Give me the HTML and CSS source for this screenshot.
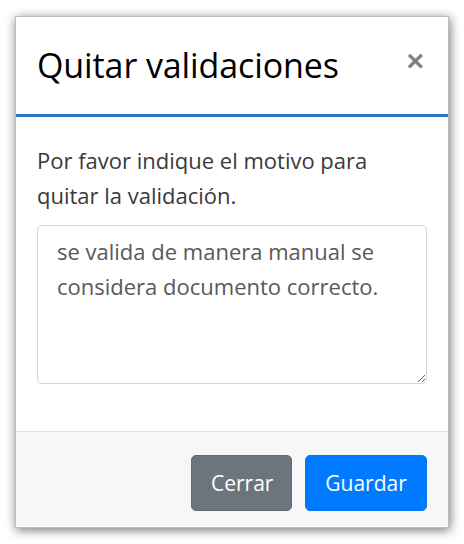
FILE: index.html
```html
<!DOCTYPE html>
<html lang="es">
<head>
    <meta charset="UTF-8">
    <meta name="viewport" content="width=device-width, initial-scale=1.0">
    <title>Quitar validaciones</title>
    <link rel="stylesheet" href="styles.css">
</head>
<body>
    <div class="modal">
        <div class="modal-header">
            <h5 class="modal-title">Quitar validaciones</h5>
            <button type="button" class="close" aria-label="Close">&times;</button>
        </div>
        <div class="modal-body">
            <p class="prompt">Por favor indique el motivo para quitar la validación.</p>
            <textarea class="form-control" rows="4">se valida de manera manual se considera documento correcto.</textarea>
        </div>
        <div class="modal-footer">
            <button type="button" class="btn btn-secondary">Cerrar</button>
            <button type="button" class="btn btn-primary">Guardar</button>
        </div>
    </div>
</body>
</html>
```

FILE: styles.css
```css
* { margin: 0; padding: 0; box-sizing: border-box; }
body {
    font-family: 'Open Sans', 'Noto Sans', sans-serif;
    background: white;
    padding: 16px 15px;
}
.modal {
    width: 434px; height: 512px; background: white;
    border: 1px solid #bdbdbd;
    box-shadow: 1px 2px 10px rgba(0,0,0,0.55);
    display: flex; flex-direction: column;
}
.modal-header {
    height: 100px; display: flex; align-items: center; justify-content: space-between;
    padding: 0 24px 0 21px; border-bottom: 3px solid #2878c8;
}
.modal-title { font-size: 34px; font-weight: 500; color: #000; margin-top: -2px; letter-spacing: -0.1px; }
.close {
    background: none; border: none; font-family: 'Liberation Sans', sans-serif;
    font-size: 30px; font-weight: bold; color: #808080; line-height: 1; margin-top: -10px;
}
.modal-body { flex: 1; padding: 26px 21px 0 21px; }
.prompt { font-size: 22px; line-height: 35px; color: #3a3a3a; margin-bottom: 12px; }
.form-control {
    display: block; width: 390px; height: 159px; resize: vertical;
    border: 1px solid #ced4da; border-radius: 5px;
    padding: 8px 19px; font-family: inherit; font-size: 22px; line-height: 35px;
    color: #595959;
}
.modal-footer {
    height: 96px; background: #f7f7f7; border-top: 1px solid #dde3ea;
    display: flex; align-items: flex-start; justify-content: flex-end; gap: 13px;
    padding: 23px 21px 0;
}
.btn {
    height: 56px; border: 1px solid transparent; border-radius: 5px;
    font-family: inherit; font-size: 21px; color: white; padding: 0 19px;
}
.btn-secondary { background: #6c757d; border-color: #626a71; width: 101px; }
.btn-primary { background: #007bff; border-color: #0a75f0; width: 122px; }
```
